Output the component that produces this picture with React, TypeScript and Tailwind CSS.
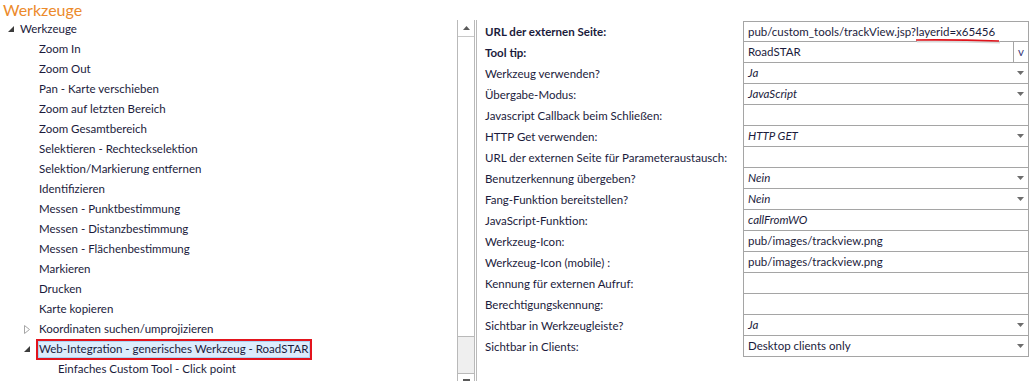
import React from "react";

type TreeItem = { label: string; level: number; arrow?: "open" | "closed"; highlight?: boolean };

const tree: TreeItem[] = [
  { label: "Werkzeuge", level: 0, arrow: "open" },
  { label: "Zoom In", level: 1 },
  { label: "Zoom Out", level: 1 },
  { label: "Pan - Karte verschieben", level: 1 },
  { label: "Zoom auf letzten Bereich", level: 1 },
  { label: "Zoom Gesamtbereich", level: 1 },
  { label: "Selektieren - Rechteckselektion", level: 1 },
  { label: "Selektion/Markierung entfernen", level: 1 },
  { label: "Identifizieren", level: 1 },
  { label: "Messen - Punktbestimmung", level: 1 },
  { label: "Messen - Distanzbestimmung", level: 1 },
  { label: "Messen - Flächenbestimmung", level: 1 },
  { label: "Markieren", level: 1 },
  { label: "Drucken", level: 1 },
  { label: "Karte kopieren", level: 1 },
  { label: "Koordinaten suchen/umprojizieren", level: 1, arrow: "closed" },
  { label: "Web-Integration - generisches Werkzeug - RoadSTAR", level: 1, arrow: "open", highlight: true },
  { label: "Einfaches Custom Tool - Click point", level: 2 },
];

type Prop = {
  label: string;
  value?: string;
  bold?: boolean;
  italic?: boolean;
  kind?: "text" | "select" | "button";
};

const props: Prop[] = [
  { label: "URL der externen Seite:", value: "pub/custom_tools/trackView.jsp?layerid=x65456", bold: true },
  { label: "Tool tip:", value: "RoadSTAR", bold: true, kind: "button" },
  { label: "Werkzeug verwenden?", value: "Ja", italic: true, kind: "select" },
  { label: "Übergabe-Modus:", value: "JavaScript", italic: true, kind: "select" },
  { label: "Javascript Callback beim Schließen:" },
  { label: "HTTP Get verwenden:", value: "HTTP GET", italic: true, kind: "select" },
  { label: "URL der externen Seite für Parameteraustausch:" },
  { label: "Benutzerkennung übergeben?", value: "Nein", italic: true, kind: "select" },
  { label: "Fang-Funktion bereitstellen?", value: "Nein", italic: true, kind: "select" },
  { label: "JavaScript-Funktion:", value: "callFromWO", italic: true },
  { label: "Werkzeug-Icon:", value: "pub/images/trackview.png" },
  { label: "Werkzeug-Icon (mobile) :", value: "pub/images/trackview.png" },
  { label: "Kennung für externen Aufruf:" },
  { label: "Berechtigungskennung:" },
  { label: "Sichtbar in Werkzeugleiste?", value: "Ja", italic: true, kind: "select" },
  { label: "Sichtbar in Clients:", value: "Desktop clients only", kind: "select" },
];

function Arrow({ type }: { type: "open" | "closed" }) {
  if (type === "open") {
    return (
      <svg width="6" height="6" viewBox="0 0 6 6" className="block">
        <path d="M6 0 L6 6 L0 6 Z" fill="#3c3c3c" />
      </svg>
    );
  }
  return (
    <svg width="6" height="9" viewBox="0 0 6 9" className="block">
      <path d="M0.5 0.5 L5.5 4.5 L0.5 8.5 Z" fill="none" stroke="#a6a6a6" strokeWidth="1" />
    </svg>
  );
}

function Caret() {
  return (
    <svg width="7" height="4" viewBox="0 0 7 4" className="block">
      <path d="M0 0 L7 0 L3.5 4 Z" fill="#6d6d6d" />
    </svg>
  );
}

export default function App() {
  return (
    <div
      className="flex h-[381px] w-[1031px] overflow-hidden whitespace-nowrap bg-white text-[11.5px] text-[#1b1b3c]"
      style={{ fontFamily: 'Lato, "Liberation Sans", sans-serif' }}
    >
      {/* left: title + tree */}
      <div className="w-[457px] shrink-0">
        <div className="h-[19px] pl-[3px] text-[16px] leading-[19px] text-[#ec8a2b]">Werkzeuge</div>
        <ul>
          {tree.map((t) => (
            <li key={t.label} className="flex h-[20px] items-center">
              <div
                className={
                  t.level === 0
                    ? "flex w-[20px] justify-center pl-[2px]"
                    : t.level === 1
                    ? "flex w-[39px] justify-end pr-[9px]"
                    : "w-[58px]"
                }
              >
                {t.arrow && <Arrow type={t.arrow} />}
              </div>
              {t.highlight ? (
                <span className="-ml-[3px] flex h-[21px] items-center border-2 border-[#e3141d] bg-[#dcecfc] pl-[1px] pr-[2px] shadow-[inset_0_0_0_1px_#a9d3f5]">
                  {t.label}
                </span>
              ) : (
                <span>{t.label}</span>
              )}
            </li>
          ))}
        </ul>
      </div>

      {/* scrollbar */}
      <div className="flex shrink-0 pt-[20px]">
        <div className="flex w-[18px] flex-col border-x border-[#b9b9b9] bg-[#efefef]">
          <div className="flex h-[17px] items-center justify-center border-b border-[#c8c8c8] bg-white">
            <svg width="7" height="4" viewBox="0 0 7 4">
              <path d="M0 4 L7 4 L3.5 0 Z" fill="#5a5a5a" />
            </svg>
          </div>
          <div className="h-[300px] border-b border-[#b9b9b9] bg-white" />
          <div className="flex-1" />
          <div className="flex h-[8px] justify-center border-t border-[#b9b9b9] bg-white pt-[5px]">
            <div className="h-[2px] w-[7px] bg-[#5a5a5a]" />
          </div>
        </div>
        <div className="ml-[1px] w-px bg-[#b9b9b9]" />
      </div>

      {/* right: property grid */}
      <div className="flex-1 pt-[21px]">
        {props.map((p, i) => (
          <div key={p.label} className="flex h-[21px]">
            <div className={`flex w-[266px] items-center pl-[8px] ${p.bold ? "font-bold" : ""}`}>{p.label}</div>
            <div
              className={`relative flex w-[286px] items-center border-x border-b border-[#a5a5a5] ${
                i === 0 ? "border-t" : ""
              } ${p.italic ? "italic" : ""}`}
            >
              <span className="flex-1 pl-[4px]">{p.value}</span>
              {p.kind === "select" && (
                <div className="pr-[4px]">
                  <Caret />
                </div>
              )}
              {p.kind === "button" && (
                <div className="flex h-full w-[15px] items-center justify-center border-l border-[#a5a5a5] text-[#3a3a7a]">
                  v
                </div>
              )}
              {i === 0 && (
                <svg className="absolute left-[171px] top-[16px]" width="86" height="6" viewBox="0 0 86 6">
                  <path d="M1 2 Q40 1.5 84 3" stroke="#d8d8d8" strokeWidth="2" fill="none" transform="translate(1,1.5)" />
                  <path d="M1 2 Q40 1.5 84 3" stroke="#e1141c" strokeWidth="1.6" fill="none" />
                </svg>
              )}
            </div>
          </div>
        ))}
      </div>
    </div>
  );
}
